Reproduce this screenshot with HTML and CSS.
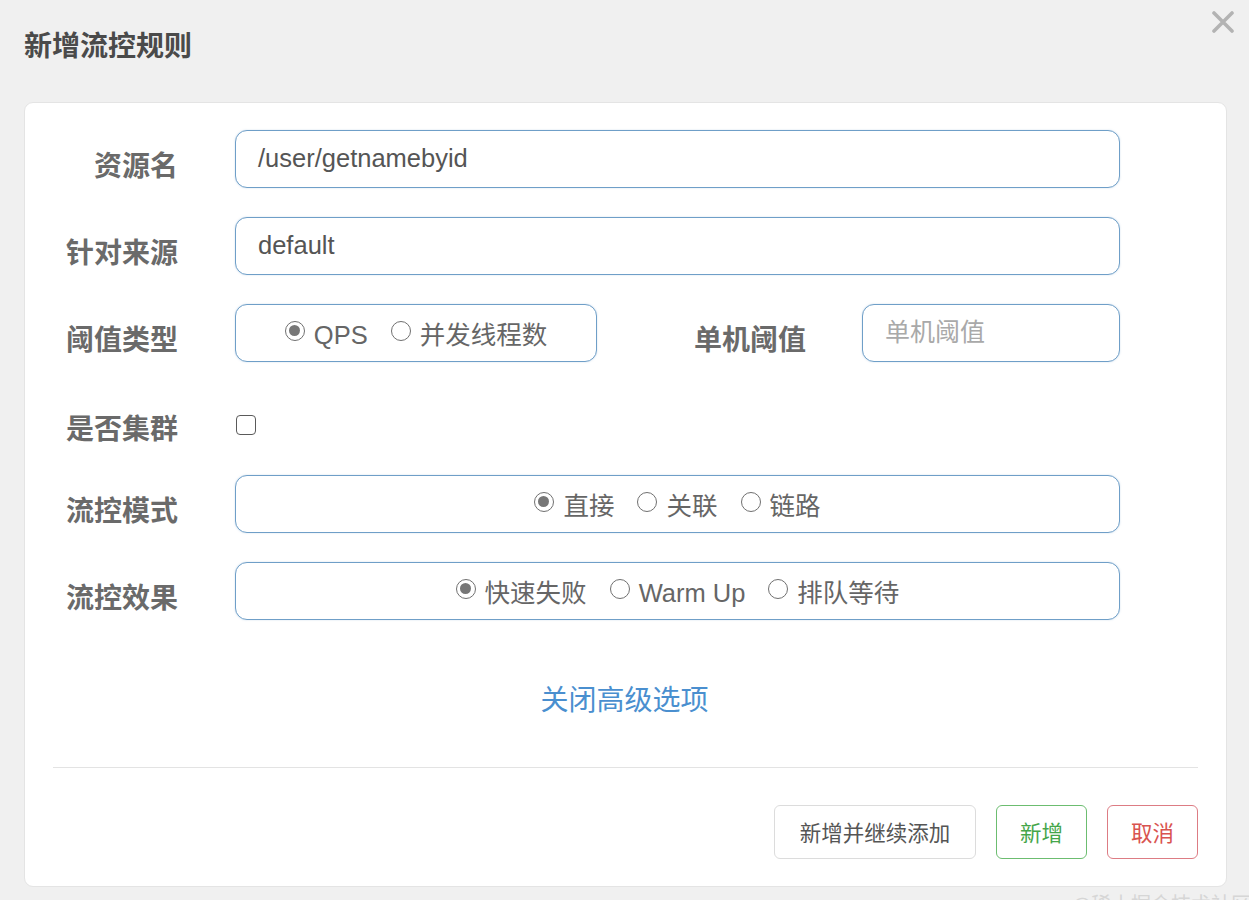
FILE: index.html
```html
<!DOCTYPE html>
<html lang="zh">
<head>
<meta charset="utf-8">
<title>新增流控规则</title>
<link rel="stylesheet" href="styles.css">
</head>
<body>
<div class="dialog">
  <div class="dialog-header">
    <h1 class="dialog-title">新增流控规则</h1>
    <button class="close-btn" aria-label="close">
      <svg width="22" height="22" viewBox="0 0 22 22"><path d="M2 2 L20 20 M20 2 L2 20" stroke="#b3b3b3" stroke-width="3.6" stroke-linecap="round"/></svg>
    </button>
  </div>
  <div class="card">
    <div class="form">
      <div class="row">
        <label class="label">资源名</label>
        <div class="field text-field">/user/getnamebyid</div>
      </div>
      <div class="row">
        <label class="label">针对来源</label>
        <div class="field text-field">default</div>
      </div>
      <div class="row">
        <label class="label">阈值类型</label>
        <div class="field radio-box narrow">
          <span class="radio-item"><span class="radio checked"></span>QPS</span>
          <span class="radio-item"><span class="radio"></span>并发线程数</span>
        </div>
        <label class="label label-inline">单机阈值</label>
        <div class="field text-field small placeholder">单机阈值</div>
      </div>
      <div class="row row-check">
        <label class="label">是否集群</label>
        <span class="checkbox"></span>
      </div>
      <div class="row">
        <label class="label">流控模式</label>
        <div class="field radio-box">
          <span class="radio-item"><span class="radio checked"></span>直接</span>
          <span class="radio-item"><span class="radio"></span>关联</span>
          <span class="radio-item"><span class="radio"></span>链路</span>
        </div>
      </div>
      <div class="row">
        <label class="label">流控效果</label>
        <div class="field radio-box">
          <span class="radio-item"><span class="radio checked"></span>快速失败</span>
          <span class="radio-item"><span class="radio"></span>Warm Up</span>
          <span class="radio-item"><span class="radio"></span>排队等待</span>
        </div>
      </div>
    </div>
    <div class="toggle"><a class="toggle-link">关闭高级选项</a></div>
    <div class="divider"></div>
    <div class="actions">
      <button class="btn btn-default">新增并继续添加</button>
      <button class="btn btn-success">新增</button>
      <button class="btn btn-danger">取消</button>
    </div>
  </div>
  <div class="watermark">@稀土掘金技术社区</div>
</div>
</body>
</html>
```

FILE: styles.css
```css
html, body {
  margin: 0;
  padding: 0;
}
body {
  width: 1249px;
  height: 900px;
  overflow: hidden;
  background: #f0f0f0;
  font-family: "Liberation Sans", "Noto Sans CJK SC", sans-serif;
  color: #555;
}
.dialog {
  display: flex;
  flex-direction: column;
}
.dialog-header {
  position: relative;
  padding: 24px 24px 0 24px;
  height: 102px;
  box-sizing: border-box;
}
.dialog-title {
  margin: 0;
  font-family: "Noto Sans CJK SC", sans-serif;
  font-size: 28px;
  font-weight: 700;
  line-height: 40px;
  color: #4a4a4a;
}
.close-btn {
  position: absolute;
  top: 11px;
  right: 15px;
  width: 22px;
  height: 22px;
  padding: 0;
  border: 0;
  background: none;
}
.close-btn svg {
  display: block;
}
.card {
  margin: 0 22px 0 24px;
  height: 785px;
  box-sizing: border-box;
  background: #fff;
  border: 1px solid #e4e4e4;
  border-radius: 9px;
  padding: 27px 0 0 0;
  display: flex;
  flex-direction: column;
}
.form {
  display: flex;
  flex-direction: column;
  gap: 29px;
  padding-right: 106px;
}
.row {
  display: flex;
  align-items: center;
  height: 58px;
}
.row-check {
  height: 43px;
  margin-top: 12px;
}
.label {
  flex: 0 0 153px;
  text-align: right;
  margin-right: 57px;
  padding-top: 9px;
  font-family: "Noto Sans CJK SC", sans-serif;
  font-size: 28px;
  font-weight: 700;
  color: #6a6a6a;
  line-height: 40px;
}
.row-check .label {
  padding-top: 4px;
}
.label-inline {
  flex: 1 1 auto;
  margin-right: 56px;
}
.field {
  height: 58px;
  box-sizing: border-box;
  border: 1.5px solid #6f9fc8;
  border-radius: 12px;
  background: #fff;
  box-shadow: 0 0 2px rgba(111, 159, 200, 0.35);
}
.text-field {
  flex: 1 1 auto;
  display: flex;
  align-items: center;
  padding: 0 0 2px 22px;
  font-size: 25.5px;
  color: #555;
}
.text-field.small {
  flex: 0 0 258px;
}
.placeholder {
  font-family: "Noto Sans CJK SC", sans-serif;
  font-size: 25px;
  color: #a9a9a9;
  padding-bottom: 6px;
}
.radio-box {
  flex: 1 1 auto;
  display: flex;
  justify-content: center;
  align-items: center;
  gap: 23px;
  padding-top: 4px;
  font-size: 25.5px;
  color: #666;
}
.radio-box.narrow {
  flex: 0 0 362px;
}
.radio-item {
  display: inline-flex;
  align-items: center;
  gap: 9px;
  line-height: 34px;
}
.radio {
  width: 20px;
  height: 20px;
  box-sizing: border-box;
  border: 1.6px solid #707070;
  border-radius: 50%;
  position: relative;
  top: -4px;
  background: #fff;
}
.radio.checked::after {
  content: "";
  position: absolute;
  left: 2.9px;
  top: 2.9px;
  width: 11px;
  height: 11px;
  border-radius: 50%;
  background: #777;
}
.checkbox {
  width: 20px;
  height: 20px;
  box-sizing: border-box;
  border: 1.6px solid #5a5a5a;
  border-radius: 4px;
  margin-left: 1px;
}
.toggle {
  margin-top: 58px;
  text-align: center;
  line-height: 40px;
  padding-right: 2px;
}
.toggle-link {
  font-family: "Noto Sans CJK SC", sans-serif;
  font-size: 28px;
  color: #4a8fcf;
  cursor: pointer;
}
.divider {
  margin: 42px 28px 0 28px;
  height: 0;
  border-top: 1.5px solid #e3e3e3;
}
.actions {
  display: flex;
  justify-content: flex-end;
  gap: 20px;
  margin-top: 37px;
  padding-right: 28px;
}
.btn {
  height: 54px;
  box-sizing: border-box;
  border-radius: 6px;
  background: #fff;
  font-family: "Noto Sans CJK SC", sans-serif;
  font-size: 21.5px;
  padding: 0 0 2px 0;
  cursor: pointer;
}
.btn-default {
  width: 202px;
  border: 1.5px solid #dcdcdc;
  color: #555;
}
.btn-success {
  width: 91px;
  border: 1.5px solid #6cbd70;
  color: #45a64a;
}
.btn-danger {
  width: 91px;
  border: 1.5px solid #dd7c84;
  color: #d9534f;
}
.watermark {
  margin-top: 5px;
  padding-left: 1072px;
  font-family: "Noto Sans CJK SC", sans-serif;
  font-size: 20px;
  line-height: 24px;
  color: #d6d6d6;
  white-space: nowrap;
}
```
